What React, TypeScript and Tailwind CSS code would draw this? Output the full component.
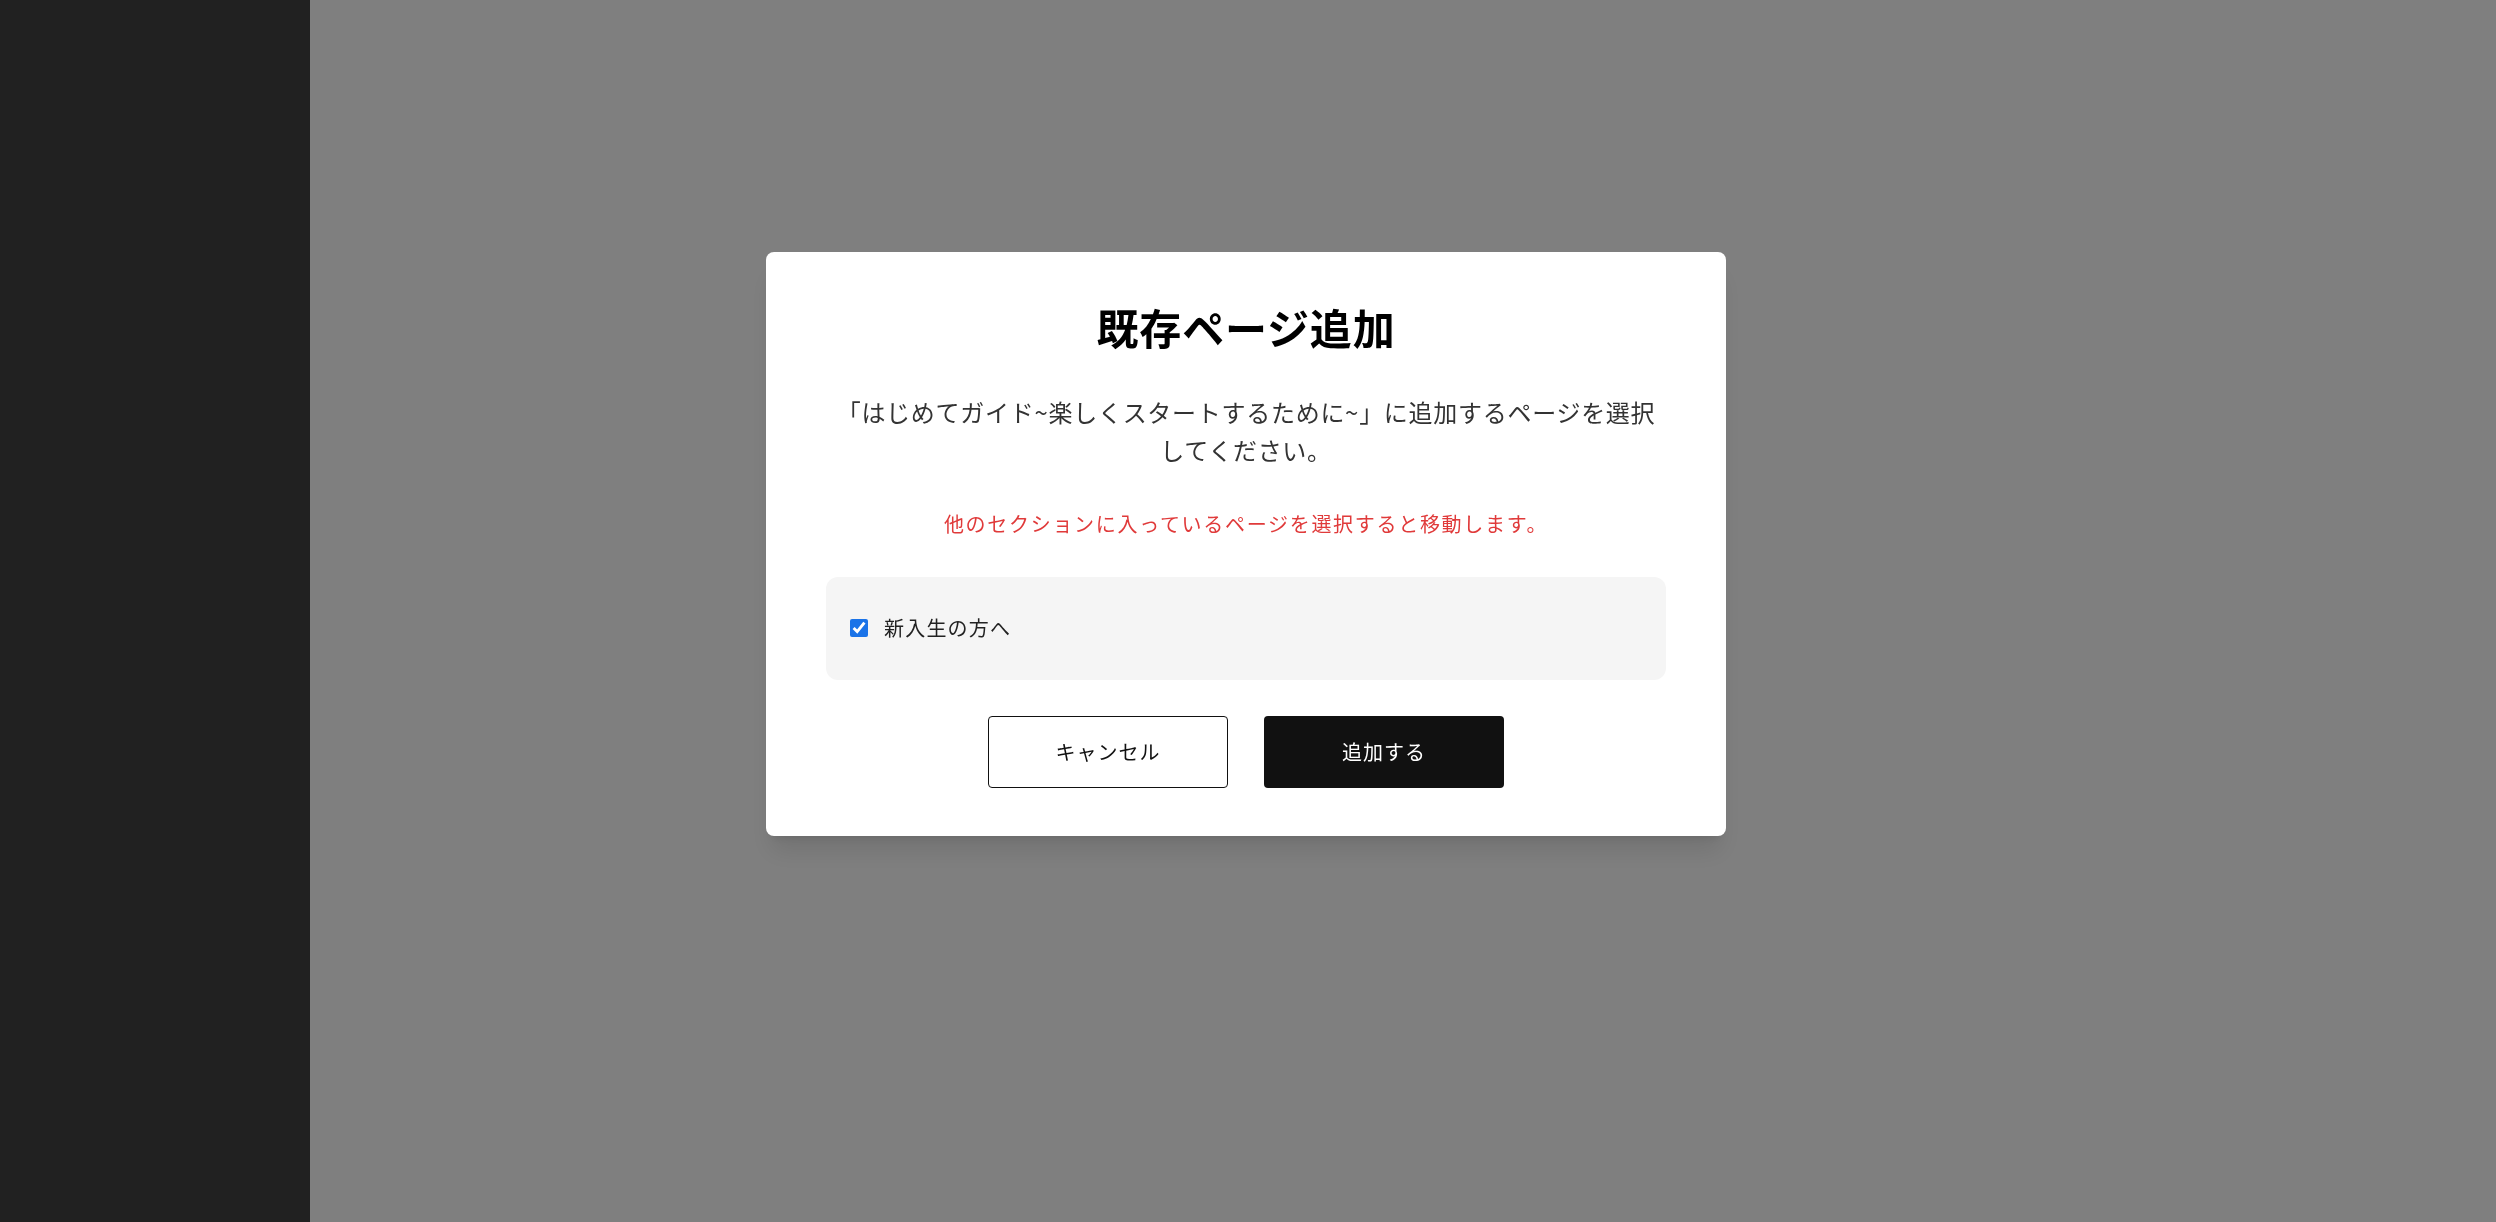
import { useState } from "react";

const jp = { fontFamily: '"Noto Sans CJK JP", "Noto Sans", sans-serif' };

function AddPageModal() {
  const [checked, setChecked] = useState(true);

  return (
    <div className="fixed inset-0 z-50 flex justify-center bg-black/50 pt-[252px] pr-1">
      <div
        style={jp}
        className="h-[584px] w-[960px] rounded-lg bg-white px-[60px] pt-[43px] pb-[48px] text-center shadow-xl"
      >
        <h2 className="text-[42px] font-bold leading-[63px] tracking-[0.02em] text-black">
          既存ページ追加
        </h2>
        <p className="mt-[35px] text-[24px] leading-[38.4px] tracking-[0.03em] text-[#333]">
          「はじめてガイド~楽しくスタートするために~」に追加するページを選択してください。
        </p>
        <p className="mt-[38px] text-[20px] leading-[32px] tracking-[0.085em] text-[#e03a3a]">
          他のセクションに入っているページを選択すると移動します。
        </p>
        <div className="mt-[37px] flex h-[103px] items-center rounded-xl bg-[#f5f5f5] px-6">
          <label className="flex cursor-pointer items-center gap-4">
            <input
              type="checkbox"
              checked={checked}
              onChange={(e) => setChecked(e.target.checked)}
              className="h-[18px] w-[18px] accent-[#1a73e8]"
            />
            <span className="text-[20px] tracking-[0.06em] text-[#222]">
              新入生の方へ
            </span>
          </label>
        </div>
        <div className="mt-[36px] flex justify-center gap-9">
          <button className="h-[72px] w-[240px] rounded border border-[#111] bg-white text-[20px] tracking-[0.05em] text-[#111]">
            キャンセル
          </button>
          <button className="h-[72px] w-[240px] rounded bg-[#111] text-[20px] tracking-[0.05em] text-white">
            追加する
          </button>
        </div>
      </div>
    </div>
  );
}

export default function App() {
  return (
    <div className="flex h-screen w-full">
      <aside className="h-full w-[310px] shrink-0 bg-[#424242]" />
      <main className="h-full flex-1 bg-white" />
      <AddPageModal />
    </div>
  );
}
